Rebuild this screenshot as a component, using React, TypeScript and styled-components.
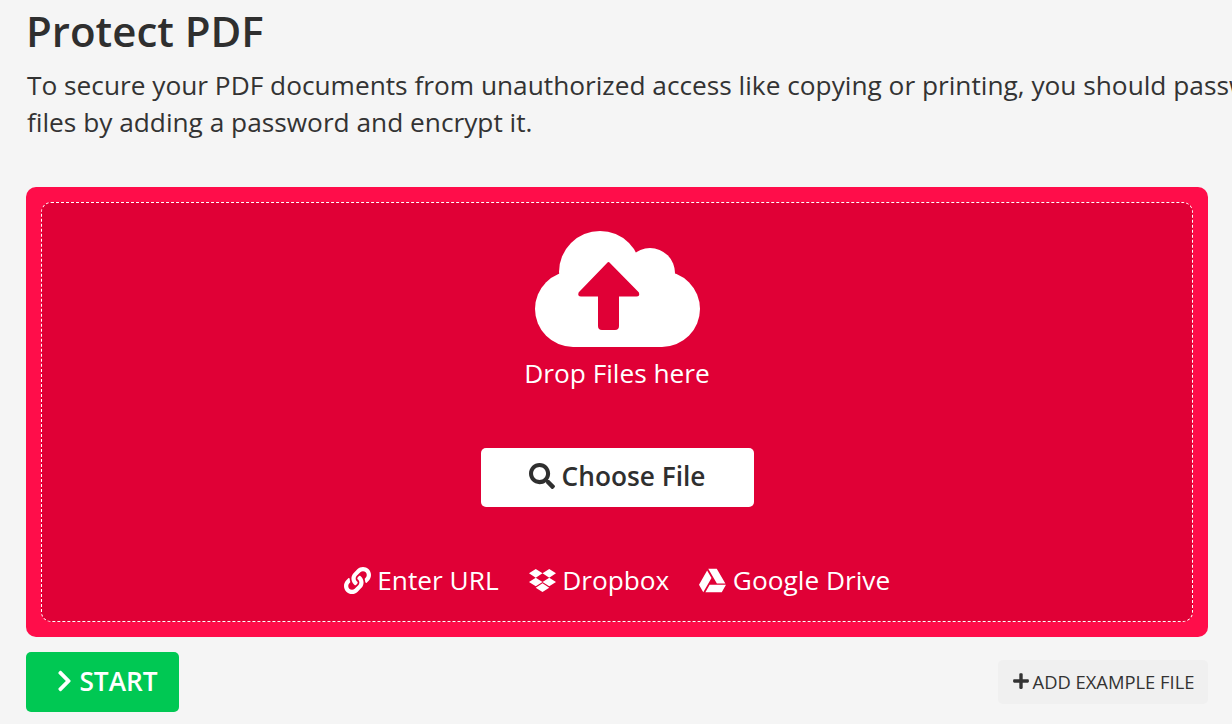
import React from "react";
import styled, { createGlobalStyle } from "styled-components";
import { FaLink, FaDropbox, FaGoogleDrive, FaSearch, FaPlus, FaChevronRight } from "react-icons/fa";

const Global = createGlobalStyle`
  html, body { margin: 0; padding: 0; height: 724px; overflow: hidden; background: #f5f5f5; }
  body { font-family: "Open Sans", "Liberation Sans", sans-serif; color: #333; }
  * { box-sizing: border-box; }
`;

const Page = styled.main`
  width: 1232px;
  height: 724px;
  overflow: hidden;
  padding: 4px 24px 0 26px;
`;

const Title = styled.h1`
  margin: 0;
  font-size: 42px;
  line-height: 54px;
  font-weight: 600;
  color: #2f2f2f;
`;

const Lead = styled.p`
  margin: 9px 0 0 1px;
  width: 1460px;
  font-size: 26.25px;
  line-height: 37px;
  color: #333;
`;

const DropZone = styled.section`
  margin-top: 46px;
  width: 1182px;
  height: 450px;
  padding: 15px;
  border-radius: 10px;
  background: #ff0d4a;
`;

const DashedArea = styled.div`
  height: 420px;
  border: 1px dashed #fff;
  border-radius: 10px;
  background: #e00036;
  color: #fff;
  display: flex;
  flex-direction: column;
  align-items: center;
  padding-top: 28px;
`;

const CloudIcon = styled.svg`
  width: 165px;
  height: 116px;
  display: block;
`;

const DropText = styled.div`
  margin-top: 7px;
  font-size: 26.25px;
  line-height: 38px;
`;

const ChooseButton = styled.button`
  margin-top: 56px;
  width: 273px;
  height: 59px;
  padding: 0 0 3px;
  border: 0;
  border-radius: 5px;
  background: #fff;
  color: #2f2f2f;
  font: 600 26.25px "Open Sans", sans-serif;
  display: flex;
  align-items: center;
  justify-content: center;
  gap: 7px;
  svg { width: 26px; height: 26px; }
`;

const Sources = styled.nav`
  margin-top: 54px;
  display: flex;
  align-items: center;
  gap: 30px;
`;

const SourceLink = styled.a`
  display: flex;
  align-items: center;
  gap: 6.5px;
  color: #fff;
  font-size: 26.25px;
  line-height: 38px;
  svg { width: 27px; height: 27px; }
`;

const Actions = styled.div`
  margin-top: 15px;
  width: 1182px;
  display: flex;
  justify-content: space-between;
  align-items: flex-start;
`;

const StartButton = styled.button`
  width: 153px;
  height: 60px;
  padding: 0 0 2px 10px;
  border: 0;
  border-radius: 5px;
  background: #00c853;
  color: #fff;
  font: 600 26.25px "Open Sans", sans-serif;
  display: flex;
  align-items: center;
  justify-content: center;
  gap: 7px;
  svg { width: 15px; height: 24px; }
`;

const ExampleButton = styled.button`
  width: 210px;
  height: 44px;
  margin-top: 8px;
  padding: 0 0 2px 1px;
  border: 0;
  border-radius: 5px;
  background: #f0f0f0;
  color: #333;
  font: 400 18.375px "Open Sans", sans-serif;
  display: flex;
  align-items: center;
  justify-content: center;
  gap: 4px;
  svg { width: 16px; height: 18px; }
`;

export default function App() {
  return (
    <Page>
      <Global />
      <Title>Protect PDF</Title>
      <Lead>
        To secure your PDF documents from unauthorized access like copying or printing, you should password protect your
        files by adding a password and encrypt it.
      </Lead>
      <DropZone>
        <DashedArea>
          <CloudIcon viewBox="0 0 165 116" aria-hidden="true">
            <g fill="#fff">
              <circle cx="65" cy="41" r="41" />
              <circle cx="115" cy="42" r="25" />
              <circle cx="38" cy="78" r="38" />
              <circle cx="127" cy="78" r="38" />
              <rect x="38" y="50" width="89" height="66" />
            </g>
            <path
              d="M73.5 32 L44.5 62 Q43.5 64.5 46 64.5 H64 V95 Q64 98 67 98 H80 Q83 98 83 95 V64.5 H101.5 Q104 64.5 103 62 Z"
              fill="#e00036"
              stroke="#e00036"
              strokeWidth="2"
              strokeLinejoin="round"
            />
          </CloudIcon>
          <DropText>Drop Files here</DropText>
          <ChooseButton>
            <FaSearch />
            Choose File
          </ChooseButton>
          <Sources>
            <SourceLink><FaLink />Enter URL</SourceLink>
            <SourceLink><FaDropbox />Dropbox</SourceLink>
            <SourceLink><FaGoogleDrive />Google Drive</SourceLink>
          </Sources>
        </DashedArea>
      </DropZone>
      <Actions>
        <StartButton><FaChevronRight />START</StartButton>
        <ExampleButton><FaPlus />ADD EXAMPLE FILE</ExampleButton>
      </Actions>
    </Page>
  );
}
